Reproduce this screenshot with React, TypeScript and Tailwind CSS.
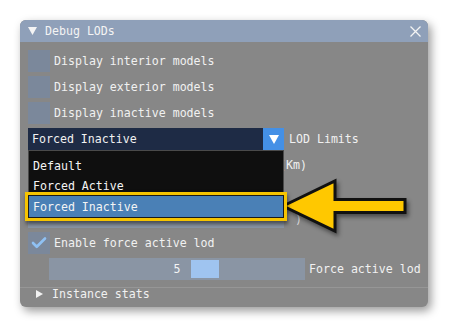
import { Check } from "lucide-react";

const font = { fontFamily: '"DejaVu Sans Mono", "Liberation Mono", monospace' };

function CheckRow({ label, checked }: { label: string; checked?: boolean }) {
  return (
    <div className="flex h-[22px] items-center gap-[4px]">
      <div className="flex h-[22px] w-[22px] items-center justify-center bg-[#7b889b]">
        {checked && <Check className="h-[18px] w-[18px] text-[#8fc1f4]" strokeWidth={3.5} />}
      </div>
      <span className="relative top-[1px] text-[#f1f1f1]">{label}</span>
    </div>
  );
}

export default function App() {
  return (
    <div
      className="relative h-[328px] w-[449px] overflow-hidden bg-white pl-[20px] pt-[20px] text-[11.6px] leading-none"
      style={font}
    >
      <div className="flex h-[287px] w-[408px] flex-col overflow-visible rounded-[6px] bg-[#878787] shadow-[3px_4px_10px_rgba(0,0,0,0.4)]">
        {/* title bar */}
        <div className="flex h-[22px] items-center rounded-t-[6px] bg-[#8fa0b9] pl-[8px] pr-[7px] text-[#f4f4f4]">
          <svg width="9" height="8" viewBox="0 0 9 8" className="mr-[8px]">
            <path d="M0 0 H9 L4.5 8 Z" fill="#f4f4f4" />
          </svg>
          <span className="relative top-[1px] flex-1">Debug LODs</span>
          <svg width="11" height="11" viewBox="0 0 11 11">
            <path d="M0.5 0.5 L10.5 10.5 M10.5 0.5 L0.5 10.5" stroke="#f4f4f4" strokeWidth="1.3" />
          </svg>
        </div>

        {/* body */}
        <div className="flex flex-col gap-[4px] px-[8px] pt-[8px]">
          <CheckRow label="Display interior models" />
          <CheckRow label="Display exterior models" />
          <CheckRow label="Display inactive models" />

          <div className="relative z-10 flex h-[22px] items-center gap-[5px]">
            <div className="flex h-[22px] w-[256px] items-center bg-[#1e2b45]">
              <span className="relative top-[1px] flex-1 pl-[4px] text-[#f1f1f1]">Forced Inactive</span>
              <div className="flex h-[22px] w-[21px] items-center justify-center bg-[#4490e6]">
                <svg width="10" height="9" viewBox="0 0 10 9">
                  <path d="M0 0 H10 L5 9 Z" fill="#ffffff" />
                </svg>
              </div>
            </div>
            <span className="relative top-[1px] text-[#f1f1f1]">LOD Limits</span>

            {/* open popup */}
            <div className="absolute left-0 top-[22px] h-[70px] w-[256px] border border-[#4a4a4a] bg-[#0f0f0f] pt-[5px] text-[#f4f4f4]">
              <div className="flex h-[20px] items-center pl-[4px] pt-[2px]">Default</div>
              <div className="flex h-[20px] items-center pl-[4px] pt-[2px]">Forced Active</div>
            </div>
            <div className="absolute left-[-3px] top-[64px] h-[29px] w-[262px] border-[3px] border-[#f6c400] shadow-[1px_3px_4px_rgba(0,0,0,0.5)]">
              <div className="flex h-full w-full items-center border border-[#1a1a1a] bg-[#4a80b6] pl-[4px] pt-[2px] text-[#f4f4f4]">
                Forced Inactive
              </div>
            </div>
          </div>

          <div className="flex h-[22px] items-center gap-[6px]">
            <div className="h-[22px] w-[245px] bg-[#8a95a4]" />
            <span className="relative top-[1px] text-[#f1f1f1]">(Km)</span>
          </div>
          <div className="flex h-[22px] items-center">
            <div className="h-[22px] w-[245px] bg-[#8a95a4]" />
          </div>
          <div className="flex h-[22px] items-center gap-[11px]">
            <div className="h-[22px] w-[256px] bg-[#8a95a4]" />
            <span className="relative top-[3px] text-[#d8d8d8]">)</span>
          </div>

          <CheckRow label="Enable force active lod" checked />

          <div className="flex h-[22px] items-center gap-[4px] pl-[21px]">
            <div className="relative flex h-[22px] w-[256px] shrink-0 items-center justify-center bg-[#8a95a4]">
              <div className="absolute left-[142px] top-[2px] h-[18px] w-[28px] bg-[#9fc4f0]" />
              <span className="relative top-[1px] text-[#f4f4f4]">5</span>
            </div>
            <span className="relative top-[1px] shrink-0 whitespace-nowrap text-[#f1f1f1]">Force active lod</span>
          </div>
        </div>

        <div className="mt-[7px] h-px w-full bg-[#969696]" />
        <div className="flex h-[10px] items-center pl-[16px] pt-[1px] text-[#f1f1f1]">
          <svg width="7" height="8" viewBox="0 0 7 8" className="mr-[9px]">
            <path d="M0 0 L7 4 L0 8 Z" fill="#f1f1f1" />
          </svg>
          <span className="relative top-[1px]">Instance stats</span>
        </div>
      </div>

      {/* callout arrow */}
      <svg
        className="pointer-events-none absolute left-0 top-0"
        width="449"
        height="328"
        viewBox="0 0 449 328"
        style={{ filter: "drop-shadow(2px 3px 2px rgba(0,0,0,0.45))" }}
      >
        <path
          d="M283 206 L335 181 L335 199.5 L405 199.5 L405 212.5 L335 212.5 L335 231 Z"
          fill="#ffc800"
          stroke="#111111"
          strokeWidth="3"
          strokeLinejoin="miter"
        />
      </svg>
    </div>
  );
}
